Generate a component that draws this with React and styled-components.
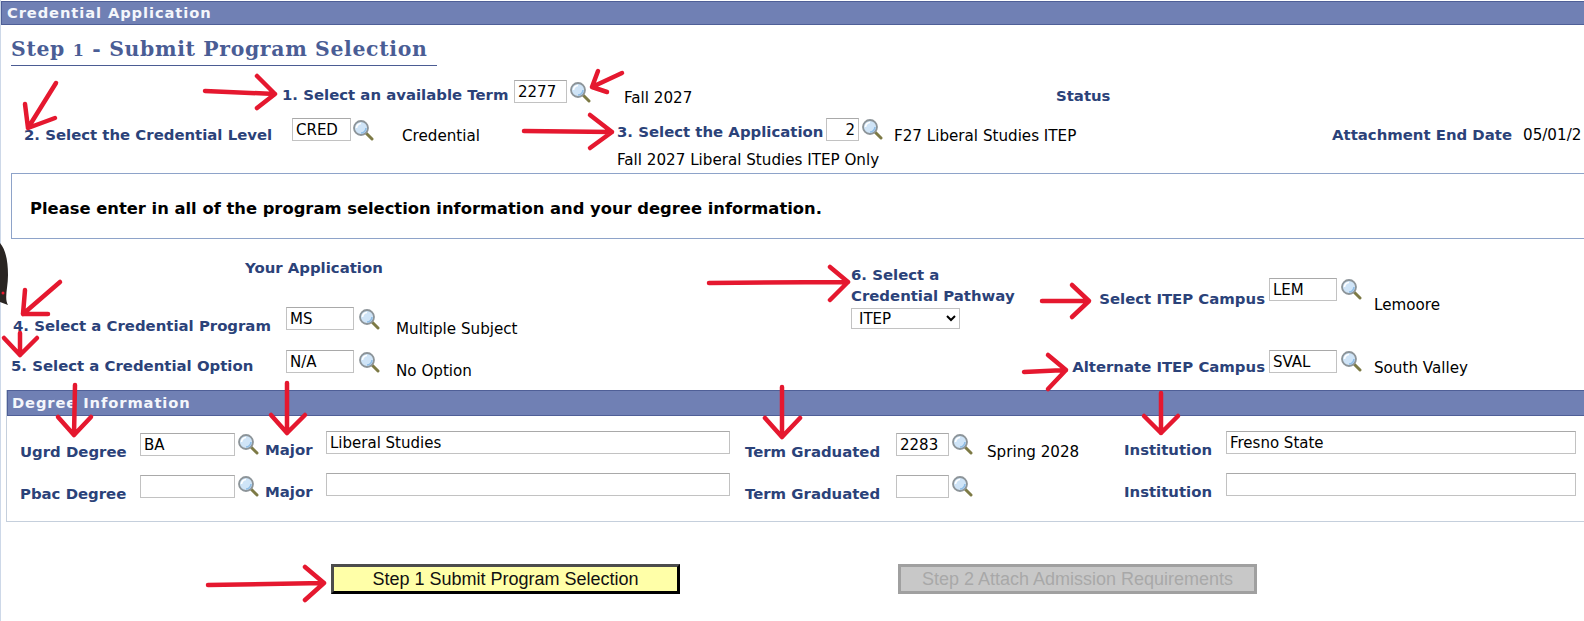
import React from "react";
import styled, { createGlobalStyle } from "styled-components";

const Global = createGlobalStyle`
  html, body { margin: 0; padding: 0; background: #fff; overflow: hidden; }
  #root { width: 1584px; height: 621px; overflow: hidden; }
`;

const Page = styled.div`
  position: relative;
  width: 1584px;
  height: 621px;
  overflow: hidden;
  box-sizing: border-box;
  padding-top: 1px;
  box-shadow: inset 1px 0 0 #cdd8e8;
  font-family: "DejaVu Sans", Verdana, sans-serif;
  color: #000;
`;

const TitleBar = styled.div`
  height: 24px;
  margin-left: 1px;
  box-sizing: border-box;
  background: #7080b4;
  border: 1px solid #4f5f97;
  border-right: none;
  color: #f4f6fb;
  font-size: 14.7px;
  font-weight: 700;
  letter-spacing: 0.9px;
  line-height: 22px;
  padding-left: 5px;
`;

const Heading = styled.h1`
  margin: 12px 0 0 11px;
  width: 426px;
  height: 28px;
  box-sizing: content-box;
  border-bottom: 1px solid #4b5c93;
  font-family: "DejaVu Serif", Georgia, serif;
  font-size: 20.4px;
  line-height: 25px;
  font-weight: 700;
  letter-spacing: 0.65px;
  color: #4a5d95;
  white-space: nowrap;
`;

const OldNum = styled.span`
  font-size: 16px;
`;

const Row = styled.div`
  display: grid;
  grid-template-columns: ${(p) => p.$cols};
  padding-left: ${(p) => p.$pad || 0}px;
  height: ${(p) => p.$h}px;
  margin-top: ${(p) => p.$mt || 0}px;
  align-items: start;
`;

const Label = styled.div`
  font-size: 14.9px;
  font-weight: 700;
  line-height: 18px;
  color: #2b4279;
  white-space: nowrap;
  margin-top: ${(p) => p.$top || 0}px;
`;

const CampusLabel = styled(Label)`
  text-align: right;
  padding-right: 4px;
`;

const Text = styled.div`
  font-size: 15.15px;
  line-height: 18px;
  white-space: nowrap;
  margin-top: ${(p) => p.$top || 0}px;
`;

const Input = styled.input`
  box-sizing: border-box;
  display: block;
  width: ${(p) => p.$w}px;
  height: 23px;
  margin: ${(p) => p.$top || 0}px 0 0 0;
  padding: 0 3px;
  border: 1px solid #c2c2c2;
  border-top-color: #a9a9a9;
  background: #fff;
  color: #000;
  font-family: "DejaVu Sans", Verdana, sans-serif;
  font-size: 15px;
  text-align: ${(p) => p.$align || "left"};
  outline: none;
`;

const LookupIcon = styled.svg`
  display: block;
  width: 22px;
  height: 22px;
  margin-top: ${(p) => p.$top || 0}px;
`;

const Lookup = ({ top }) => (
  <LookupIcon $top={top} viewBox="0 0 22 22" aria-hidden="true">
    <line x1="13.5" y1="13.5" x2="20" y2="20" stroke="#7d7a45" strokeWidth="3" strokeLinecap="round" />
    <circle cx="9" cy="9" r="7" fill="#cfe4f7" stroke="#8c9499" strokeWidth="1.8" />
    <path d="M4.5 9a4.5 4.5 0 0 1 4.5-4.5" fill="none" stroke="#fff" strokeWidth="1.6" />
    <path d="M9 14a5 5 0 0 0 5-5" fill="none" stroke="#8fbde6" strokeWidth="1.6" />
  </LookupIcon>
);

const MessageBox = styled.div`
  margin: 1px 0 0 11px;
  height: 66px;
  box-sizing: border-box;
  border: 1px solid #8ea3c9;
  border-right: none;
  padding-left: 18px;
  font-size: 16.35px;
  font-weight: 700;
  line-height: 70px;
  white-space: nowrap;
`;

const ProgramArea = styled.div`
  display: flex;
  height: 151px;
`;

const LeftColumn = styled.div`
  width: 851px;
  flex: none;
`;

const SubHead = styled(Label)`
  margin: 20px 0 0 245px;
`;

const PathwayColumn = styled.div`
  width: 180px;
  flex: none;
  padding-top: 26px;
`;

const PathwayLabel = styled(Label)`
  line-height: 21px;
`;

const PathwaySelect = styled.select`
  display: block;
  width: 109px;
  height: 21px;
  margin-top: 1px;
  box-sizing: border-box;
  border: 1px solid #c2c2c2;
  background: #fff;
  padding-left: 3px;
  font-family: "DejaVu Sans", Verdana, sans-serif;
  font-size: 15px;
`;

const CampusColumn = styled.div`
  flex: 1;
  padding-top: 39px;
`;

const DegreeBox = styled.section`
  margin-left: 6px;
  height: 132px;
  box-sizing: border-box;
  border-left: 1px solid #c5cfdc;
  border-bottom: 1px solid #c5cfdc;
`;

const DegreeBar = styled(TitleBar)`
  margin-left: 0;
  height: 26px;
  line-height: 24px;
  padding-left: 4px;
`;

const ButtonRow = styled.div`
  display: flex;
  margin: 42px 0 0 331px;
  gap: 218px;
`;

const Action = styled.button`
  width: ${(p) => p.$w}px;
  height: 30px;
  box-sizing: border-box;
  font-family: "Liberation Sans", Arial, sans-serif;
  font-size: 18px;
  padding: 0;
  background: ${(p) => (p.disabled ? "#c8c8c8" : "#ffffa8")};
  color: ${(p) => (p.disabled ? "#a8a8a8" : "#111")};
  border: 3px solid ${(p) => (p.disabled ? "#a0a0a0" : "#000")};
  border-top-color: ${(p) => (p.disabled ? "#a0a0a0" : "#4c4c4c")};
  border-left-color: ${(p) => (p.disabled ? "#a0a0a0" : "#4c4c4c")};
`;

const Overlay = styled.svg`
  position: absolute;
  left: 0;
  top: 0;
  width: 1584px;
  height: 621px;
  pointer-events: none;
`;

const arrows = [
  "M205 91 L275 94 M257 76 L275 94 L257 108",
  "M622 73 L592 87 M598 71 L592 87 L607 92",
  "M56 83 L28 128 M25 104 L28 128 L55 118",
  "M524 131 L612 132 M590 115 L612 132 L590 148",
  "M709 283 L848 282 M830 267 L848 282 L830 300",
  "M1042 301 L1089 301 M1072 285 L1089 301 L1072 317",
  "M1024 372 L1066 370 M1048 355 L1066 370 L1048 389",
  "M60 282 L23 314 M25 290 L23 314 L48 314",
  "M20 333 L20 355 M4 338 L20 355 L37 338",
  "M75 385 L74 435 M58 417 L74 435 L91 417",
  "M287 383 L287 433 M271 415 L287 433 L305 415",
  "M782 387 L782 437 M765 418 L782 437 L800 418",
  "M1161 393 L1161 433 M1144 416 L1161 433 L1178 416",
  "M208 585 L324 583 M305 567 L324 583 L305 600",
];

const degreeCols = "120px 97px 28px 61px 419px 151px 55px 36px 137px 102px auto";

export default function App() {
  return (
    <Page>
      <Global />
      <TitleBar>Credential Application</TitleBar>
      <Heading>
        Step <OldNum>1</OldNum> - Submit Program Selection
      </Heading>

      <Row $pad={282} $cols="232px 55px 55px 432px auto" $h={38} $mt={14}>
        <Label $top={6}>1. Select an available Term</Label>
        <Input $w={53} defaultValue="2277" />
        <Lookup top={1} />
        <Text $top={9}>Fall 2027</Text>
        <Label $top={7}>Status</Label>
      </Row>

      <Row $pad={24} $cols="268px 60px 50px 215px 209px 35px 33px 438px 191px auto" $h={33}>
        <Label $top={8}>2. Select the Credential Level</Label>
        <Input $w={59} defaultValue="CRED" />
        <Lookup top={1} />
        <Text $top={9}>Credential</Text>
        <Label $top={5}>3. Select the Application</Label>
        <Input $w={33} $align="right" defaultValue="2" />
        <Lookup top={0} />
        <Text $top={9}>F27 Liberal Studies ITEP</Text>
        <Label $top={8}>Attachment End Date</Label>
        <Text $top={8}>05/01/2</Text>
      </Row>

      <Row $pad={617} $cols="auto" $h={21}>
        <Text>Fall 2027 Liberal Studies ITEP Only</Text>
      </Row>

      <MessageBox>Please enter in all of the program selection information and your degree information.</MessageBox>

      <ProgramArea>
        <LeftColumn>
          <SubHead>Your Application</SubHead>
          <Row $pad={13} $cols="273px 72px 38px auto" $h={43} $mt={30}>
            <Label $top={10}>4. Select a Credential Program</Label>
            <Input $w={68} defaultValue="MS" />
            <Lookup top={1} />
            <Text $top={13}>Multiple Subject</Text>
          </Row>
          <Row $pad={11} $cols="275px 72px 38px auto" $h={42}>
            <Label $top={7}>5. Select a Credential Option</Label>
            <Input $w={68} defaultValue="N/A" />
            <Lookup top={1} />
            <Text $top={12}>No Option</Text>
          </Row>
        </LeftColumn>
        <PathwayColumn>
          <PathwayLabel>
            6. Select a
            <br />
            Credential Pathway
          </PathwayLabel>
          <PathwaySelect defaultValue="ITEP">
            <option>ITEP</option>
          </PathwaySelect>
        </PathwayColumn>
        <CampusColumn>
          <Row $cols="238px 71px 34px auto" $h={72}>
            <CampusLabel $top={12}>Select ITEP Campus</CampusLabel>
            <Input $w={68} defaultValue="LEM" />
            <Lookup top={0} />
            <Text $top={18}>Lemoore</Text>
          </Row>
          <Row $cols="238px 71px 34px auto" $h={30}>
            <CampusLabel $top={8}>Alternate ITEP Campus</CampusLabel>
            <Input $w={68} defaultValue="SVAL" />
            <Lookup top={0} />
            <Text $top={9}>South Valley</Text>
          </Row>
        </CampusColumn>
      </ProgramArea>

      <DegreeBox>
        <DegreeBar>Degree Information</DegreeBar>
        <Row $pad={13} $cols={degreeCols} $h={42} $mt={15}>
          <Label $top={12}>Ugrd Degree</Label>
          <Input $top={2} $w={95} defaultValue="BA" />
          <Lookup top={2} />
          <Label $top={10}>Major</Label>
          <Input $w={404} defaultValue="Liberal Studies" />
          <Label $top={12}>Term Graduated</Label>
          <Input $top={2} $w={53} defaultValue="2283" />
          <Lookup top={2} />
          <Text $top={12}>Spring 2028</Text>
          <Label $top={10}>Institution</Label>
          <Input $w={350} defaultValue="Fresno State" />
        </Row>
        <Row $pad={13} $cols={degreeCols} $h={42}>
          <Label $top={12}>Pbac Degree</Label>
          <Input $top={2} $w={95} />
          <Lookup top={2} />
          <Label $top={10}>Major</Label>
          <Input $w={404} />
          <Label $top={12}>Term Graduated</Label>
          <Input $top={2} $w={53} />
          <Lookup top={2} />
          <span />
          <Label $top={10}>Institution</Label>
          <Input $w={350} />
        </Row>
      </DegreeBox>

      <ButtonRow>
        <Action $w={349}>Step 1 Submit Program Selection</Action>
        <Action $w={359} disabled>Step 2 Attach Admission Requirements</Action>
      </ButtonRow>

      <Overlay viewBox="0 0 1584 621" aria-hidden="true">
        <path d="M0 243 C6 250 8 262 8 275 C8 288 4 298 8 305 L0 302 Z" fill="#2a2522" />
        <circle cx="3" cy="293" r="1.5" fill="#e8192e" />
        {arrows.map((d) => (
          <path key={d} d={d} fill="none" stroke="#e5182f" strokeWidth="4.5" strokeLinecap="round" strokeLinejoin="round" />
        ))}
      </Overlay>
    </Page>
  );
}
